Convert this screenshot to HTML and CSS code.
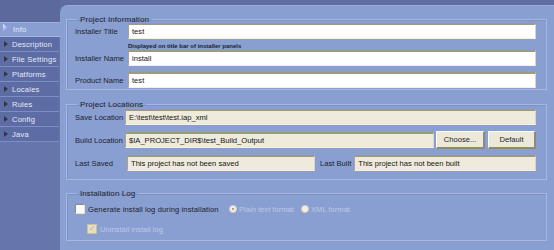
FILE: index.html
```html
<!DOCTYPE html>
<html lang="en">

<head>
    <meta charset="UTF-8">
    <title>Project Info</title>
    <link rel="stylesheet" href="styles.css">
</head>

<body>
    <div class="app">
        <ul class="tabs">
            <li class="tab active"><span class="arrow-blue"></span>Info</li>
            <li class="tab"><span class="arrow"></span>Description</li>
            <li class="tab"><span class="arrow"></span>File Settings</li>
            <li class="tab"><span class="arrow"></span>Platforms</li>
            <li class="tab"><span class="arrow"></span>Locales</li>
            <li class="tab"><span class="arrow"></span>Rules</li>
            <li class="tab"><span class="arrow"></span>Config</li>
            <li class="tab"><span class="arrow"></span>Java</li>
        </ul>
        <div class="panel">
            <!-- Project Information -->
            <fieldset class="group info">
                <legend>Project Information</legend>
                <div class="row">
                    <label>Installer Title</label>
                    <div class="field">test</div>
                </div>
                <div class="hint">Displayed on title bar of installer panels</div>
                <div class="row">
                    <label>Installer Name</label>
                    <div class="field">install</div>
                </div>
                <div class="row">
                    <label>Product Name</label>
                    <div class="field">test</div>
                </div>
            </fieldset>

            <!-- Project Locations -->
            <fieldset class="group locations">
                <legend>Project Locations</legend>
                <div class="row">
                    <label>Save Location</label>
                    <div class="field readonly">E:\test\test\test.iap_xml</div>
                </div>
                <div class="row">
                    <label>Build Location</label>
                    <div class="field readonly">$IA_PROJECT_DIR$\test_Build_Output</div>
                    <button class="btn choose">Choose...</button>
                    <button class="btn default">Default</button>
                </div>
                <div class="row">
                    <label>Last Saved</label>
                    <div class="field readonly saved">This project has not been saved</div>
                    <label class="built-label">Last Built</label>
                    <div class="field readonly">This project has not been built</div>
                </div>
            </fieldset>

            <!-- Installation Log -->
            <fieldset class="group log">
                <legend>Installation Log</legend>
                <div class="log-row">
                    <span class="check"></span>
                    <span class="check-text">Generate install log during installation</span>
                    <span class="radio selected"></span>
                    <span class="disabled plain">Plain text format</span>
                    <span class="radio"></span>
                    <span class="disabled">XML format</span>
                </div>
                <div class="log-row sub">
                    <span class="check checked">&#10003;</span>
                    <span class="disabled">Uninstall install log</span>
                </div>
            </fieldset>
        </div>
    </div>
</body>

</html>
```

FILE: styles.css
```css
* {
    margin: 0;
    padding: 0;
    box-sizing: border-box;
    font-family: 'Liberation Sans', Arial, sans-serif;
}

body {
    background: #5f6da2;
    width: 554px;
    height: 250px;
    overflow: hidden;
    font-size: 7.6px;
    color: #1b1d2c;
}

.app {
    display: flex;
    height: 250px;
}

/* Sidebar tabs */
.tabs {
    width: 60px;
    list-style: none;
    padding-top: 22px;
    background: linear-gradient(#5c699c 0, #5c699c 22px, #6675ac 22px);
    flex-shrink: 0;
}

.tab {
    display: flex;
    align-items: center;
    width: 59px;
    height: 15px;
    padding-left: 4px;
    color: #e6eaf6;
    background: #5d6ca5;
    border-bottom: 1px solid #7e8ec4;
    letter-spacing: 0.2px;
}

.tab.active {
    width: 60px;
    background: #8a9fd1;
    border-top: 1px solid #9fb0de;
    border-bottom: 1px solid #a7b6e0;
    padding-left: 3px;
}

.arrow {
    width: 0;
    height: 0;
    border-top: 3.5px solid transparent;
    border-bottom: 3.5px solid transparent;
    border-left: 4px solid #35363e;
    margin-right: 4px;
}

.arrow-blue {
    width: 5px;
    height: 8px;
    margin-right: 5px;
    margin-top: -3px;
    background: linear-gradient(135deg, #ffffff, #4f6fe0);
    clip-path: polygon(0 0, 100% 50%, 0 100%);
}

/* Main panel */
.panel {
    flex: 1;
    margin-top: 5px;
    background: #8a9fd1;
    border-top-left-radius: 8px;
    border-top: 1px solid #98abdb;
    padding: 9px 7px 0 6px;
}

.group {
    border: 1px solid #a7b7e1;
    box-shadow: inset 1px 1px 0 #7d91c5;
    padding: 0 10px 0 8px;
}

.group legend {
    padding: 0 3px;
    margin-left: 2px;
    font-size: 8px;
    letter-spacing: 0.1px;
    line-height: 9px;
}

.row {
    display: flex;
    align-items: center;
}

.row label {
    width: 53px;
    flex-shrink: 0;
    white-space: nowrap;
}

.field {
    flex: 1;
    height: 16px;
    line-height: 13px;
    padding-left: 3px;
    background: #ffffff;
    border-top: 2px solid #9d9983;
    border-left: 1px solid #a8a48f;
    border-right: 1px solid #d9d6c8;
    border-bottom: 1px solid #f2f0e8;
    color: #141414;
    white-space: nowrap;
    overflow: hidden;
}

.field.readonly {
    background: #eeebdc;
}

/* Project Information */
.info {
    padding-bottom: 1px;
}

.info .row:first-of-type {
    margin-top: -1px;
}

.hint {
    margin: 3px 0 0 53px;
    font-size: 6px;
    font-weight: bold;
    height: 8px;
    line-height: 8px;
    white-space: nowrap;
}

.info .row + .row {
    margin-top: 6px;
}

/* Project Locations */
.locations {
    margin-top: 10px;
    padding-bottom: 8px;
}

.locations .row label {
    width: 50px;
}

.locations .row + .row {
    margin-top: 6px;
}

.locations .row:last-child label:first-child {
    width: 52px;
}

.field.saved {
    flex: none;
    width: 188px;
}

.locations .row .built-label {
    width: auto;
    margin: 0 3px 0 5px;
}

.btn {
    height: 18px;
    margin-left: 2px;
    background: #ece9d8;
    border-top: 1px solid #fbfaf4;
    border-left: 1px solid #fbfaf4;
    border-right: 2px solid #8c8a7c;
    border-bottom: 2px solid #8c8a7c;
    font-size: 7.6px;
    color: #1b1d2c;
}

.btn.choose {
    width: 49px;
}

.btn.default {
    width: 48px;
    margin-left: 3px;
}

/* Installation Log */
.log {
    margin-top: 9px;
    height: 52px;
}

.log-row {
    display: flex;
    align-items: center;
    margin-top: 6px;
    height: 10px;
}

.log-row.sub {
    margin-top: 10px;
    padding-left: 12px;
}

.check {
    width: 10px;
    height: 10px;
    background: #fbfaf5;
    border-top: 1px solid #8c8a7c;
    border-left: 1px solid #8c8a7c;
    border-right: 1px solid #e4e2d6;
    border-bottom: 1px solid #e4e2d6;
    margin-right: 3px;
    flex-shrink: 0;
}

.check.checked {
    background: #e4dfc4;
    border-color: #c6c1a4;
    color: #b7b190;
    font-size: 8px;
    line-height: 8px;
    text-align: center;
}

.check-text {
    width: 141px;
    letter-spacing: 0.1px;
}

.radio {
    width: 8px;
    height: 8px;
    border-radius: 50%;
    background: #f1efe3;
    border: 1px solid #d3d0bd;
    margin-right: 2px;
    position: relative;
}

.radio.selected::after {
    content: "";
    position: absolute;
    left: 2px;
    top: 2px;
    width: 2px;
    height: 2px;
    border-radius: 50%;
    background: #8e8c7e;
}

.disabled {
    color: #bcc8e8;
}

.disabled.plain {
    width: 62px;
}
```
